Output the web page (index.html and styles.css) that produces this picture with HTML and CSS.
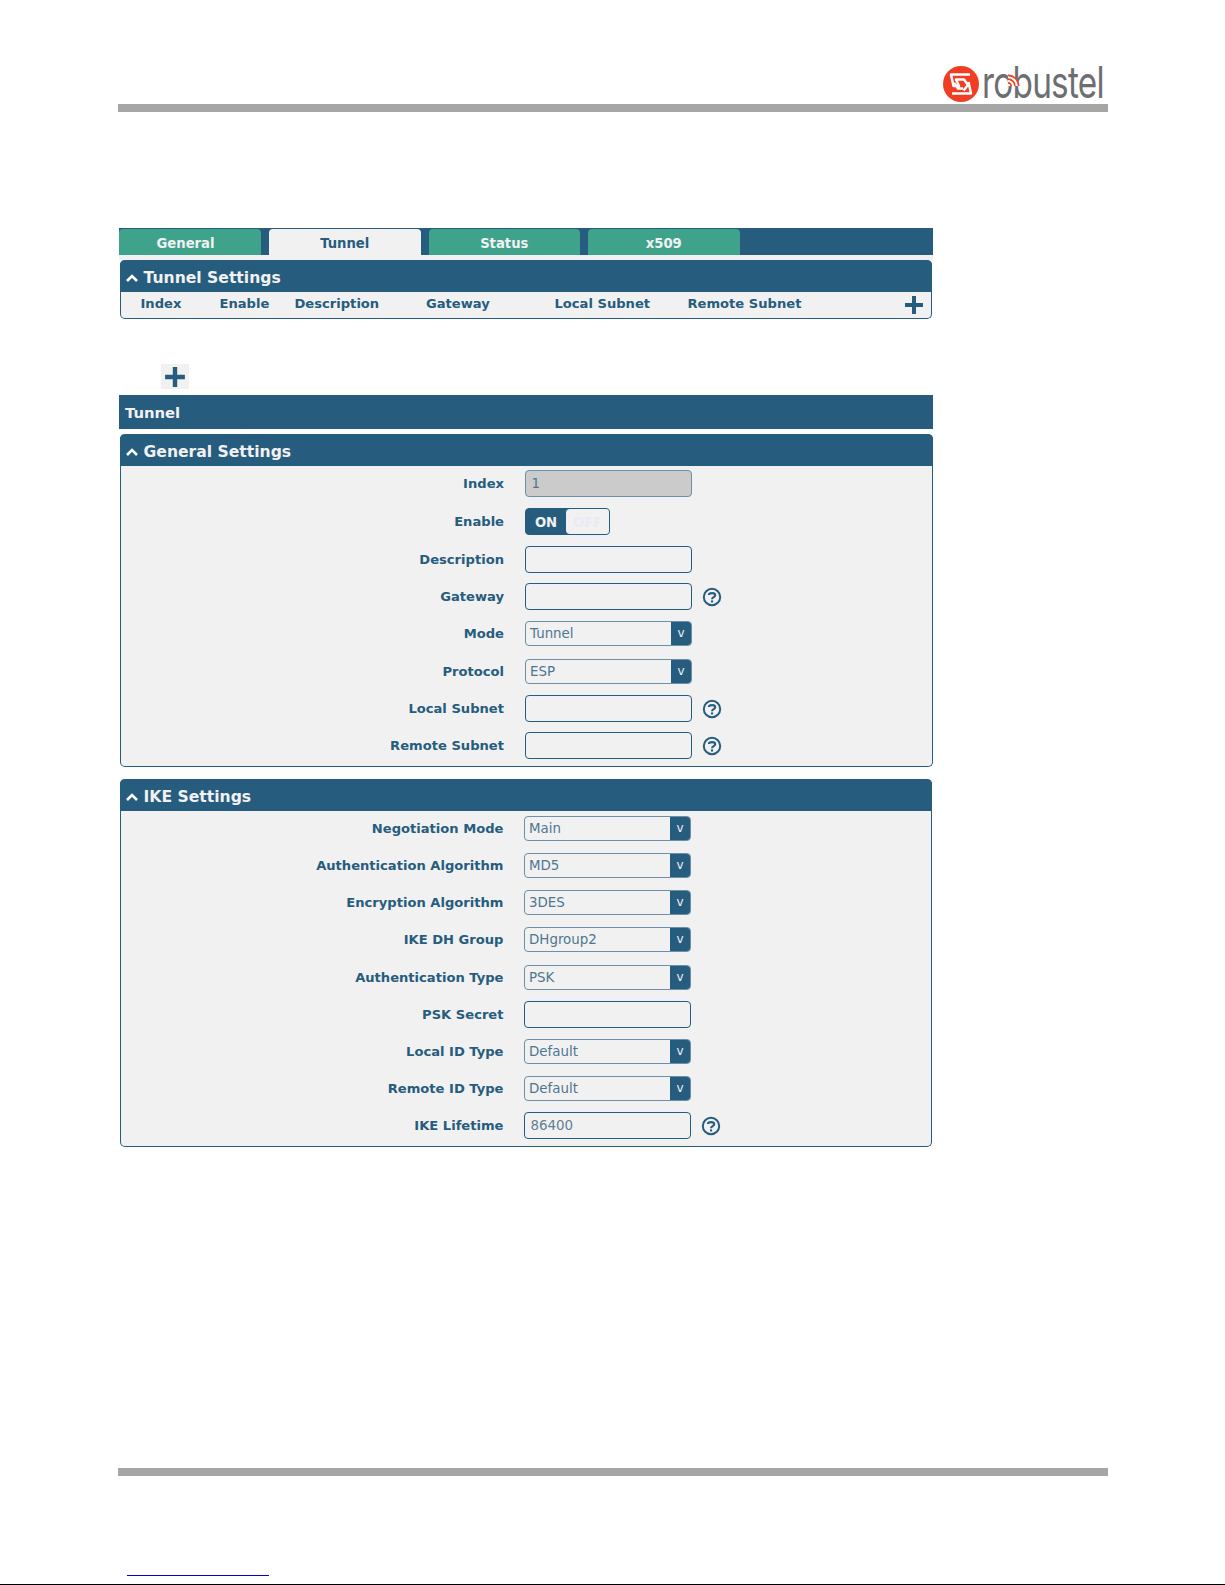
FILE: index.html
```html
<!DOCTYPE html>
<html lang="en">
<head>
<meta charset="utf-8">
<title>Tunnel</title>
<link rel="stylesheet" href="styles.css">
</head>
<body>
<svg class="defs" width="0" height="0" aria-hidden="true">
  <defs>
    <symbol id="chev" viewBox="0 0 14 10"><path d="M2 8 L7 3 L12 8" fill="none" stroke="#fff" stroke-width="2.6"/></symbol>
    <symbol id="plus" viewBox="0 0 20 20"><path d="M10 1 V19 M1 10 H19" fill="none" stroke="#265c7e" stroke-width="4"/></symbol>
    <symbol id="help" viewBox="0 0 20 20"><circle cx="10" cy="10" r="8.2" fill="none" stroke="#265c7e" stroke-width="2"/><path d="M6.9 8 C7 5.6 13.2 5.4 13.2 8.2 C13.2 10.2 10 10 10 12.2" fill="none" stroke="#265c7e" stroke-width="2.1"/><rect x="9" y="13.4" width="2.1" height="2.1" fill="#265c7e"/></symbol>
  </defs>
</svg>
<header class="top">
  <div class="logo">
    <svg class="logo-mark" viewBox="0 0 36 36" aria-hidden="true">
      <circle cx="18" cy="18" r="18" fill="#ef3e23"/>
      <path d="M27 8.5 H8 L10.5 20 H16 L13 13.5 H21 L25 19 L20.5 24.5 M9 27.5 H28 L25.5 16 M20 22.5 H15 L11 17" fill="none" stroke="#fff" stroke-width="2.5" stroke-linejoin="round"/>
    </svg>
    <span class="logo-word">robustel</span>
    <svg class="logo-wifi" viewBox="0 0 14 14" aria-hidden="true">
      <path d="M1 13 V1 A12 12 0 0 1 13 13 Z" fill="#fff"/>
      <path d="M1 1.5 A11.5 11.5 0 0 1 12.5 13 M1 5.5 A7.5 7.5 0 0 1 8.5 13 M1 9.5 A3.5 3.5 0 0 1 4.5 13" fill="none" stroke="#ef3e23" stroke-width="1.8"/>
    </svg>
  </div>
  <div class="rule"></div>
</header>

<main class="content">
  <nav class="tabs">
    <a class="tab first">General</a>
    <a class="tab active">Tunnel</a>
    <a class="tab">Status</a>
    <a class="tab">x509</a>
  </nav>
  <div class="strip"></div>
  <section class="panel table-panel">
    <h2 class="panel-head"><svg class="chev"><use href="#chev"/></svg>Tunnel Settings</h2>
    <div class="cols">
      <span class="c1">Index</span>
      <span class="c2">Enable</span>
      <span class="c3">Description</span>
      <span class="c4">Gateway</span>
      <span class="c5">Local Subnet</span>
      <span class="c6">Remote Subnet</span>
      <svg class="plus"><use href="#plus"/></svg>
    </div>
  </section>

  <div class="plus-box"><svg class="plus-big"><use href="#plus"/></svg></div>
  <div class="bar">Tunnel</div>

  <section class="panel general">
    <h2 class="panel-head"><svg class="chev"><use href="#chev"/></svg>General Settings</h2>
    <div class="rows">
      <div class="row"><label>Index</label><span class="field disabled">1</span></div>
      <div class="row"><label>Enable</label><span class="toggle"><span class="on">ON</span><span class="off">OFF</span></span></div>
      <div class="row"><label>Description</label><span class="field"></span></div>
      <div class="row"><label>Gateway</label><span class="field"></span><svg class="help"><use href="#help"/></svg></div>
      <div class="row"><label>Mode</label><span class="select"><span class="val">Tunnel</span><span class="arrow">v</span></span></div>
      <div class="row"><label>Protocol</label><span class="select"><span class="val">ESP</span><span class="arrow">v</span></span></div>
      <div class="row"><label>Local Subnet</label><span class="field"></span><svg class="help"><use href="#help"/></svg></div>
      <div class="row"><label>Remote Subnet</label><span class="field"></span><svg class="help"><use href="#help"/></svg></div>
    </div>
  </section>

  <section class="panel ike">
    <h2 class="panel-head"><svg class="chev"><use href="#chev"/></svg>IKE Settings</h2>
    <div class="rows">
      <div class="row"><label>Negotiation Mode</label><span class="select"><span class="val">Main</span><span class="arrow">v</span></span></div>
      <div class="row"><label>Authentication Algorithm</label><span class="select"><span class="val">MD5</span><span class="arrow">v</span></span></div>
      <div class="row"><label>Encryption Algorithm</label><span class="select"><span class="val">3DES</span><span class="arrow">v</span></span></div>
      <div class="row"><label>IKE DH Group</label><span class="select"><span class="val">DHgroup2</span><span class="arrow">v</span></span></div>
      <div class="row"><label>Authentication Type</label><span class="select"><span class="val">PSK</span><span class="arrow">v</span></span></div>
      <div class="row"><label>PSK Secret</label><span class="field"></span></div>
      <div class="row"><label>Local ID Type</label><span class="select"><span class="val">Default</span><span class="arrow">v</span></span></div>
      <div class="row"><label>Remote ID Type</label><span class="select"><span class="val">Default</span><span class="arrow">v</span></span></div>
      <div class="row"><label>IKE Lifetime</label><span class="field">86400</span><svg class="help"><use href="#help"/></svg></div>
    </div>
  </section>
</main>

<footer class="bottom">
  <div class="rule"></div>
  <div class="link-line"></div>
  <div class="page-edge"></div>
</footer>
</body>
</html>
```
FILE: styles.css
```css
* { box-sizing: border-box; }
html, body { margin: 0; padding: 0; }
body {
  width: 1225px;
  height: 1585px;
  background: #fff;
  font-family: "DejaVu Sans", sans-serif;
  color: #265c7e;
  display: flex;
  flex-direction: column;
  overflow: hidden;
}
.defs { display: block; height: 0; }

/* header */
.top { padding: 66px 117px 0 118px; height: 228px; flex: none; }
.logo { position: relative; height: 38px; }
.logo-mark { position: absolute; left: 825px; top: 0; width: 36px; height: 36px; }
.logo-word {
  position: absolute;
  left: 864px;
  top: -6px;
  font-family: "Inter", sans-serif;
  font-weight: 400;
  font-size: 44px;
  line-height: 44px;
  letter-spacing: -1px;
  color: #6d6e71;
  transform: scaleX(.758);
  transform-origin: left center;
  white-space: nowrap;
}
.logo-wifi { position: absolute; left: 889px; top: 8px; width: 13px; height: 13px; }
.rule { height: 8px; background: #a6a6a6; }

/* main */
.content { width: 814px; margin-left: 119px; flex: none; }
.tabs {
  height: 27px;
  background: #265c7e;
  display: flex;
  gap: 8px;
  padding-top: 1px;
}
.tab {
  width: 151.5px;
  height: 26px;
  background: #3fa38c;
  border-radius: 4px 4px 0 0;
  color: #f1f1f1;
  font-size: 13.2px;
  font-weight: 700;
  line-height: 29px;
  text-align: center;
}
.tab.first { width: 142px; padding-right: 9px; }
.tab.active { background: #f1f1f1; color: #265c7e; }
.strip { height: 5px; background: #f1f1f1; }

.panel {
  background: #f1f1f1;
  border: 1px solid #265c7e;
  border-top: 0;
  border-radius: 5px;
  margin: 0 1px 0 1px;
}
.panel-head {
  margin: 0 -1px;
  height: 32px;
  background: #265c7e;
  border-radius: 5px 5px 0 0;
  color: #f1f1f1;
  font-size: 15.6px;
  font-weight: 700;
  line-height: 20px;
  display: flex;
  align-items: center;
  padding: 3px 0 0 5px;
  gap: 4.5px;
}
.chev { width: 14px; height: 10px; flex: none; }

.cols {
  position: relative;
  height: 26px;
  font-size: 13.1px;
  font-weight: 700;
  line-height: 23px;
  display: flex;
}
.cols span { white-space: nowrap; }
.c1 { margin-left: 19.5px; width: 79px; }
.c2 { width: 75px; }
.c3 { width: 131.5px; }
.c4 { width: 128.5px; }
.c5 { width: 133px; }
.c6 { flex: 1; }
.plus { position: absolute; right: 7px; top: 3px; width: 20px; height: 20px; }

.plus-box {
  width: 28px;
  height: 25px;
  margin: 45px 0 6px 42px;
  background: #f1f1f1;
  display: flex;
  align-items: center;
  justify-content: center;
}
.plus-big { width: 22px; height: 22px; }

.bar {
  height: 34px;
  background: #265c7e;
  color: #f1f1f1;
  font-size: 14.8px;
  font-weight: 700;
  line-height: 35px;
  padding-left: 6px;
}
.general { margin: 5px 0 0 1px; height: 333px; }
.ike { margin: 12px 1px 0 1px; height: 368px; }
.general .rows { margin-top: -2px; }
.ike .rows { margin-top: -1px; }
.row {
  height: 37.33px;
  display: flex;
  align-items: center;
}
.general .row:first-child { height: 39.33px; }
.ike .row { height: 37.15px; }
.row label {
  width: 383px;
  text-align: right;
  font-size: 13.1px;
  font-weight: 700;
  white-space: nowrap;
  flex: none;
}
.field, .select, .toggle { margin-left: 21px; flex: none; }
.ike .row label { width: 382.5px; }
.ike .field, .ike .select { margin-left: 20.5px; }
.field {
  width: 167px;
  height: 27px;
  border: 1px solid #265c7e;
  border-radius: 4px;
  background: #f1f1f1;
  font-size: 13.4px;
  line-height: 25px;
  padding-left: 5.5px;
  color: #5f7f95;
}
.field.disabled { background: #cbcbcb; border-color: #6d8fa7; color: #4d7790; }
.select {
  width: 167px;
  height: 25px;
  border: 1px solid #6d8fa7;
  border-radius: 4px;
  display: flex;
  overflow: hidden;
  font-size: 13.4px;
  line-height: 23px;
}
.val { flex: 1; padding-left: 4px; color: #4d7790; }
.arrow {
  width: 20px;
  background: #265c7e;
  color: #f1f1f1;
  text-align: center;
  font-size: 12px;
  line-height: 22px;
}
.toggle {
  width: 85px;
  height: 27px;
  border: 1px solid #265c7e;
  border-radius: 4px;
  display: flex;
  overflow: hidden;
  font-size: 13.2px;
  font-weight: 700;
  line-height: 27px;
  text-align: center;
  background: #265c7e;
}
.on { width: 40px; color: #f1f1f1; }
.off { flex: 1; background: #f1f1f1; color: #eaeaf4; border-radius: 4px 0 0 4px; }
.help { width: 20px; height: 20px; margin-left: 10px; flex: none; }

/* footer */
.bottom { margin-top: auto; flex: none; }
.bottom .rule { height: 8px; margin: 0 117px 0 118px; }
.link-line { height: 1px; width: 142px; margin: 99px 0 0 127px; background: #0000d0; }
.page-edge { height: 1px; margin-top: 8px; background: #000; }
```
